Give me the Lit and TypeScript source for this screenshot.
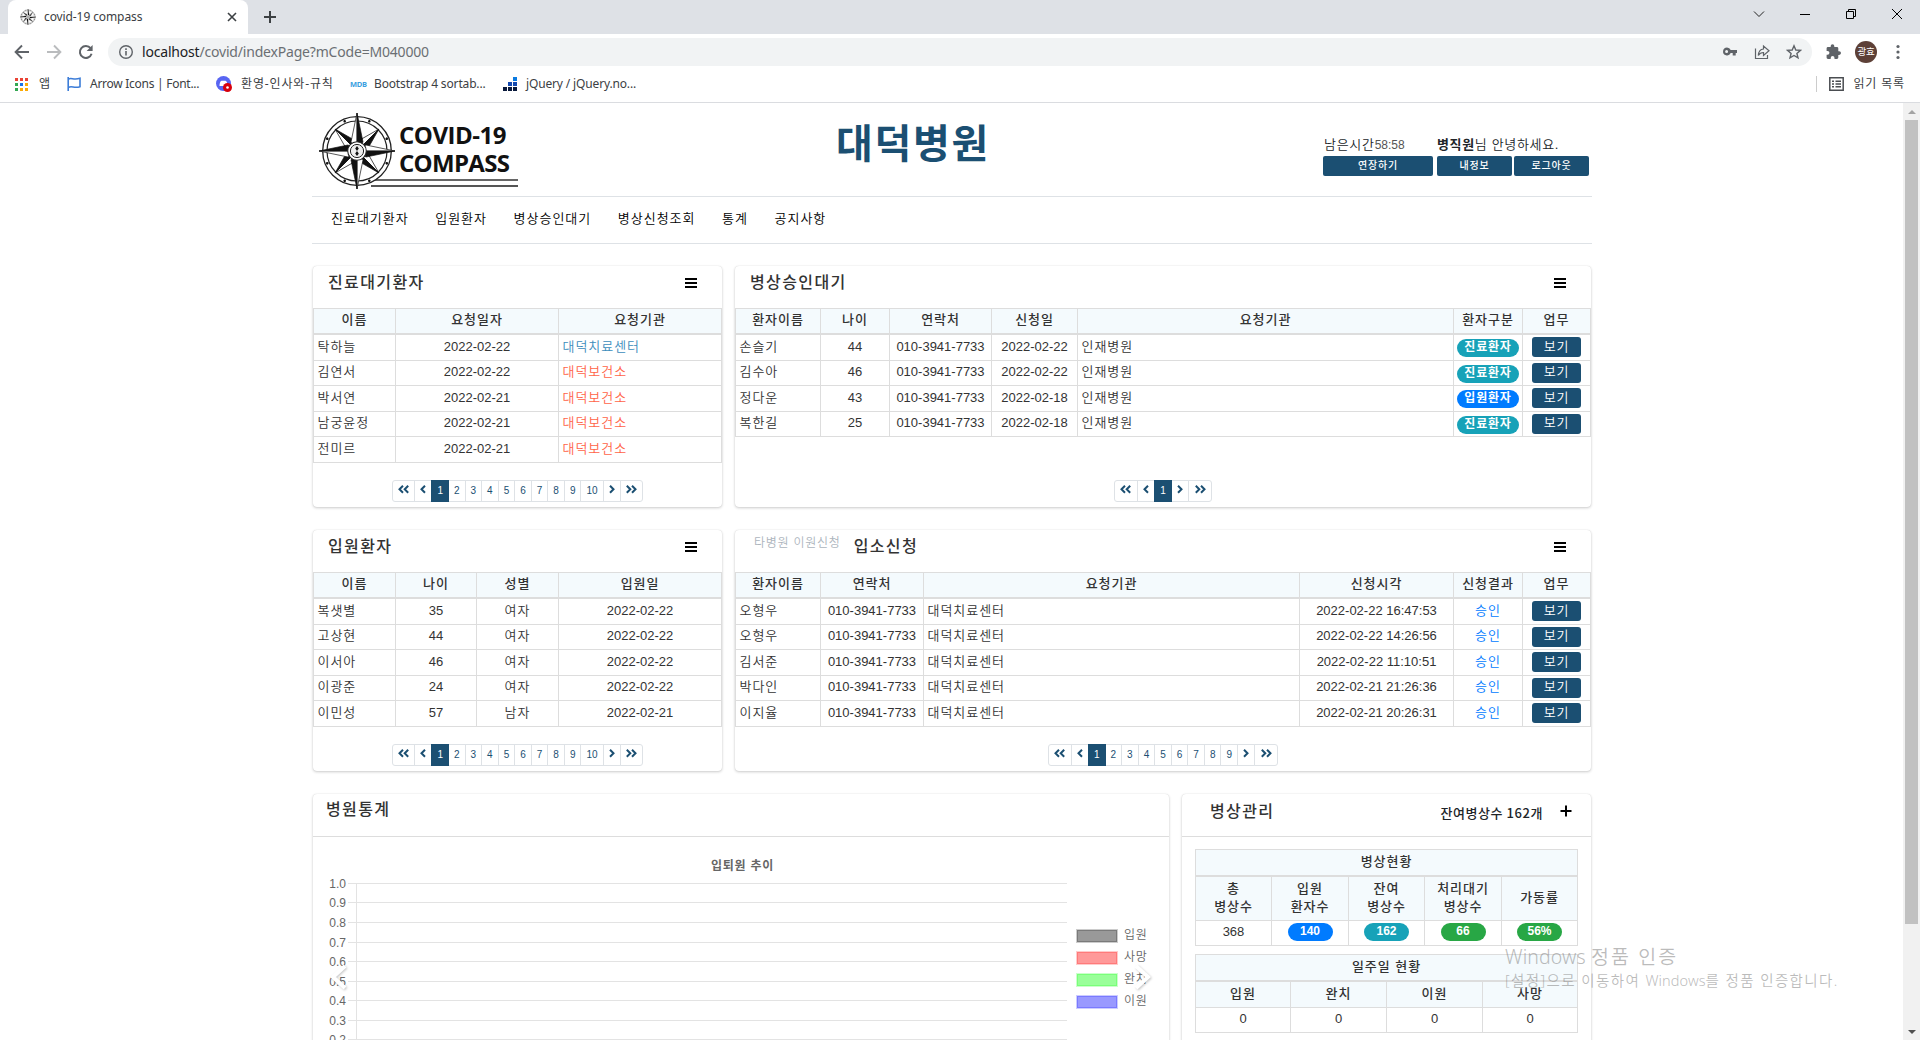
import { LitElement, html, css, svg, nothing, TemplateResult } from "lit";
import { customElement, property } from "lit/decorators.js";

type Cell = string | TemplateResult;
type Col = { w: number; label: string; align?: "left" };

const isKo = (s: string) => /[\uac00-\ud7a3]/.test(s);
const ko = (s: string) => (isKo(s) ? html`<span class="ko">${s}</span>` : s);
const link = (s: string, tone: string) => html`<span class="ko ${tone}">${s}</span>`;
const pill = (s: string, tone: string) => html`<span class="pill ${tone}">${s}</span>`;
const viewBtn = () => html`<button class="view">보기</button>`;

const tableStyles = css`
  * { box-sizing: border-box; }
  table {
    border-collapse: separate; border-spacing: 0; table-layout: fixed;
    border-left: 1px solid #ddd; border-top: 1px solid #ddd; width: 100%;
    font-size: 13px; line-height: 18px; color: #333;
  }
  th, td {
    border-right: 1px solid #ddd; border-bottom: 1px solid #ddd;
    padding: 0 4px 2px; height: 25px; text-align: center; white-space: nowrap;
    vertical-align: middle; overflow: hidden;
  }
  th { background: #f4fafd; font-weight: 500; padding: 0 2px 2px; }
  td { font-weight: 350; }
  .ko { letter-spacing: 0.95px; }
  .pill {
    display: inline-block; height: 18px; line-height: 17px; border-radius: 9px;
    color: #fff; font-weight: 700; font-size: 12px; vertical-align: middle;
  }
  .info { background: #17a2b8; }
  .primary { background: #007bff; }
  .success { background: #28a745; }
`;

@customElement("data-table")
class DataTable extends LitElement {
  @property({ attribute: false }) cols: Col[] = [];
  @property({ attribute: false }) rows: Cell[][] = [];
  static styles = [
    tableStyles,
    css`
      :host { display: block; }
      th { height: 26px; border-bottom-width: 2px; }
      tbody tr:nth-child(odd) td { height: 26px; }
      .left { text-align: left; padding-left: 3.5px; }
      .pill { width: 62px; letter-spacing: 0.8px; margin: 1px -1px 0; position: relative; top: 1px; }
      .view {
        display: block; width: 49px; height: 20px; margin: 0 auto; border: 0; border-radius: 3px;
        padding: 0 0 1px; background: #1b4f72; color: #fff; font: inherit; letter-spacing: 0.9px;
        line-height: 18px; position: relative; top: 0.5px;
      }
      .blue { color: #3c8dbc; }
      .red { color: #ff6347; }
      .ok { color: #007bff; }
    `,
  ];
  render() {
    return html`<table>
      <colgroup>${this.cols.map((c) => html`<col style="width:${c.w}px" />`)}</colgroup>
      <thead><tr>${this.cols.map((c) => html`<th>${ko(c.label)}</th>`)}</tr></thead>
      <tbody>
        ${this.rows.map((r) => html`<tr>${r.map((v, i) => html`<td class=${this.cols[i].align ?? ""}>${typeof v === "string" ? ko(v) : v}</td>`)}</tr>`)}
      </tbody>
    </table>`;
  }
}

@customElement("page-nav")
class PageNav extends LitElement {
  @property({ type: Number }) count = 1;
  static styles = css`
    :host { display: flex; justify-content: center; }
    .list { display: flex; height: 22px; }
    .item {
      box-sizing: border-box; height: 22px; border: 1px solid #dee2e6; margin-left: -1px; padding: 0 5px;
      font: 10px/20px "Liberation Sans", sans-serif; color: #1b4f72; background: #fff;
    }
    .item:first-child { margin-left: 0; border-radius: 3px 0 0 3px; }
    .item:last-child { border-radius: 0 3px 3px 0; }
    .on { background: #1b4f72; border-color: #1b4f72; color: #fff; position: relative; }
    .single { width: 18px; padding: 0 3px; }
    .double { width: 23.8px; padding: 0 4px; }
    svg { display: block; margin: 3px auto 0; fill: none; stroke: #1b4f72; stroke-width: 2; }
  `;
  private icon(d: string, w: number) {
    return html`<svg width=${w} height="12" viewBox="0 0 ${w} 12"><path d=${d} /></svg>`;
  }
  render() {
    const pages = Array.from({ length: this.count }, (_, i) => i + 1);
    return html`<div class="list">
      <span class="item double">${this.icon("M5 1.7 1.5 5.2 5 8.7M10.200 1.700 6.700 5.200 10.200 8.700", 12)}</span>
      <span class="item single">${this.icon("M6 1.7 2.500 5.200 6 8.700", 8)}</span>
      ${pages.map((p) => html`<span class="item ${p === 1 ? "on" : ""}">${p}</span>`)}
      <span class="item single">${this.icon("M2 1.7 5.500 5.200 2 8.700", 8)}</span>
      <span class="item double">${this.icon("M1.800 1.700 5.300 5.200 1.800 8.700M7 1.700 10.500 5.200 7 8.700", 12)}</span>
    </div>`;
  }
}

@customElement("list-card")
class ListCard extends LitElement {
  @property() heading = "";
  @property() other = "";
  @property({ type: Number }) pages = 1;
  @property({ attribute: false }) cols: Col[] = [];
  @property({ attribute: false }) rows: Cell[][] = [];
  static styles = css`
    :host {
      display: flex; flex-direction: column; height: 241px; background: #fff; border-radius: 4px;
      box-shadow: 0 0 1px rgba(0, 0, 0, 0.15), 0 1px 3px rgba(0, 0, 0, 0.2);
    }
    .head { height: 42px; flex: none; display: flex; padding: 0 25px 0 15px; align-items: flex-start; box-sizing: border-box; }
    .title { font-size: 16px; font-weight: 500; letter-spacing: 1.4px; line-height: 24px; margin-top: 5px; color: #333; }
    .other { font-size: 12px; font-weight: 350; letter-spacing: 0.75px; line-height: 18px; color: #adb5bd; margin: 4px 13px 0 4px; }
    .menu { margin: 12px 0 0 auto; display: block; }
    .grow { flex: 1; }
    .foot { padding-bottom: 5px; }
  `;
  render() {
    return html`<div class="head">
        ${this.other ? html`<span class="other">${this.other}</span>` : nothing}
        <span class="title">${this.heading}</span>
        <svg class="menu" width="12" height="11" viewBox="0 0 12 11"><path d="M0 0h12v2H0zM0 4h12v2H0zM0 8h12v2H0z" /></svg>
      </div>
      <data-table .cols=${this.cols} .rows=${this.rows}></data-table>
      <div class="grow"></div>
      <page-nav class="foot" .count=${this.pages}></page-nav>`;
  }
}

@customElement("compass-mark")
class CompassMark extends LitElement {
  static styles = css`:host { display: block; } svg { display: block; width: 100%; height: 100%; }`;
  private point(angle: number, r: number, w: number) {
    return svg`<g transform="rotate(${angle})">
      <path d="M0 ${-r}L${-w} ${-w * 1.5}L0 0z" fill="#fff" stroke="#111" stroke-width=".7"/>
      <path d="M0 ${-r}L${w} ${-w * 1.5}L0 0z" fill="#111" stroke="#111" stroke-width=".7"/></g>`;
  }
  render() {
    return html`<svg viewBox="-38 -38 76 76">
      <circle r="34.3" fill="#fff" stroke="#222" stroke-width="1.3" />
      <circle r="30" fill="none" stroke="#222" stroke-width="1.2" />
      ${[22.5, 67.5, 112.5, 157.5, 202.5, 247.5, 292.5, 337.5].map((a) => svg`<circle r="1.3" cy="-32.2" transform="rotate(${a})" fill="#111"/>`)}
      ${[45, 135, 225, 315].map((a) => this.point(a, 31, 6))}
      ${[0, 90, 180, 270].map((a) => this.point(a, 38, 6))}
      <circle r="9.3" fill="#fff" stroke="#222" stroke-width="1.1" />
      <circle r="6.6" fill="#eee" stroke="#222" stroke-width="1" />
      <path d="M0-5 1.8-2.4 0 0-1.8-2.4zM0 0 1.8 2.4 0 5-1.8 2.4z" fill="#111" />
    </svg>`;
  }
}

@customElement("browser-bar")
class BrowserBar extends LitElement {
  static styles = css`
    :host { display: block; height: 103px; box-sizing: border-box; border-bottom: 1px solid #dadce0; background: #fff; color: #3c4043; font-size: 12px; }
    * { box-sizing: border-box; }
    svg { display: block; flex: none; }
    .strip { height: 34px; background: #dee1e6; display: flex; align-items: center; padding-left: 8px; }
    .tab { width: 240px; height: 34px; background: #fff; border-radius: 8px 8px 0 0; display: flex; align-items: center; padding: 0 11px 0 12px; }
    .fav { width: 16px; height: 16px; margin-right: 8px; }
    .name { flex: 1; line-height: 16px; letter-spacing: -0.1px; }
    .plus { margin-left: 15px; }
    .controls { margin-left: auto; display: flex; gap: 30px; padding: 0 15px 6px 0; }
    .tools { height: 36px; display: flex; align-items: center; padding: 0 14px; }
    .nav { display: flex; gap: 16px; }
    .omni { margin-left: 14px; width: 1704px; height: 28px; border-radius: 14px; background: #f1f3f4; display: flex; align-items: center; padding: 0 10px; }
    .url { margin-left: 8px; font-size: 14px; line-height: 20px; color: #6b6f73; letter-spacing: -0.19px; }
    .host { color: #202124; }
    .acts { margin-left: auto; display: flex; gap: 16px; }
    .ext { margin: 0 13px 0 14px; }
    .face { width: 22px; height: 22px; border-radius: 50%; background: #5d4037; color: #fff; font-size: 9.5px; line-height: 21px; text-align: center; letter-spacing: -0.2px; }
    .dots { margin-left: 13px; }
    .marks { height: 28px; display: flex; align-items: center; padding: 0 15px; line-height: 18px; white-space: nowrap; }
    .mark { display: flex; align-items: center; flex: none; }
    .apps { width: 52px; gap: 11px; }
    .flag { width: 149px; gap: 9px; }
    .disc { width: 134px; gap: 9px; }
    .mdb { width: 153px; gap: 8px; }
    .jq { gap: 9px; }
    .tight { letter-spacing: -0.15px; }
    .tighter { letter-spacing: -0.27px; }
    .wide { letter-spacing: 0.85px; }
    .mdbtxt { font: 700 7.5px/10px "Open Sans", sans-serif; color: #3aa0e0; width: 16px; letter-spacing: -0.3px; }
    .read { margin-left: auto; border-left: 1px solid #ccc; height: 16px; padding-left: 12px; gap: 9px; }
  `;
  render() {
    return html`
      <div class="strip">
        <div class="tab">
          <compass-mark class="fav"></compass-mark><span class="name">covid-19 compass</span>
          <svg width="10" height="10" viewBox="0 0 10 10" stroke="#3c4043" stroke-width="1.6"><path d="M1 1 9 9M9 1 1 9" /></svg>
        </div>
        <svg class="plus" width="14" height="14" viewBox="0 0 14 14" stroke="#3c4043" stroke-width="2"><path d="M7 1v12M1 7h12" /></svg>
        <div class="controls">
          <svg width="16" height="16" viewBox="0 0 16 16" fill="none" stroke="#222"><path d="m3 5.5 5 5 5-5" /></svg>
          <svg width="16" height="16" viewBox="0 0 16 16" stroke="#000"><path d="M3 8.5h10" /></svg>
          <svg width="16" height="16" viewBox="0 0 16 16" fill="none" stroke="#000"><path d="M3.5 5.5h7v7h-7zM5.500 5.500v-2h7v7h-2" /></svg>
          <svg width="16" height="16" viewBox="0 0 16 16" stroke="#000"><path d="m3 3 10 10M13 3 3 13" /></svg>
        </div>
      </div>
      <div class="tools">
        <div class="nav">
          <svg width="16" height="16" viewBox="0 0 16 16" fill="none" stroke="#5f6368" stroke-width="1.9"><path d="M15 8H2M8 1.500 1.600 8 8 14.500" /></svg>
          <svg width="16" height="16" viewBox="0 0 16 16" fill="none" stroke="#babcbe" stroke-width="1.900"><path d="M1 8h13M8 1.500 14.400 8 8 14.500" /></svg>
          <svg width="16" height="16" viewBox="0 0 16 16" fill="none" stroke="#5f6368" stroke-width="2"><path d="M13.600 9.800A6 6 0 1 1 12.600 4.200" /><path d="M14.600 1v6h-6z" fill="#5f6368" stroke="none" /></svg>
        </div>
        <div class="omni">
          <svg width="16" height="16" viewBox="0 0 16 16"><circle cx="8" cy="8" r="6.300" fill="none" stroke="#5f6368" stroke-width="1.400" /><path d="M7.200 7h1.600v4.500H7.200zM7.200 4.300h1.600v1.600H7.200z" fill="#5f6368" /></svg>
          <span class="url"><span class="host">localhost</span>/covid/indexPage?mCode=M040000</span>
          <div class="acts">
            <svg width="16" height="16" viewBox="0 0 16 16" fill="#5f6368"><path fill-rule="evenodd" d="M5 3.500a4 4 0 0 1 3.700 2.600H15v3h-1.300V11.500h-3V9.100h-2A4 4 0 1 1 5 3.500zm-.4 2.600a1.500 1.500 0 1 0 0 3 1.500 1.500 0 0 0 0-3z" /></svg>
            <svg width="16" height="16" viewBox="0 0 16 16" fill="none" stroke="#5f6368" stroke-width="1.200"><path d="M1.500 4.500v10h12v-3.500" /><path d="M9.500 2v3C6 5.300 4.500 8 4.300 11.500 5.600 9.300 7 8.500 9.500 8.500v3L15 6.800z" /></svg>
            <svg width="16" height="16" viewBox="0 0 16 16" fill="none" stroke="#5f6368" stroke-width="1.400"><path d="m8 1.800 1.800 4.200 4.600.4-3.500 3 1.100 4.500L8 11.500l-4 2.400 1.100-4.500-3.500-3L6.200 6z" /></svg>
          </div>
        </div>
        <svg class="ext" width="16" height="16" viewBox="0 0 16 16" fill="#5f6368"><path d="M13.200 7.300h-.9V4.400c0-.8-.6-1.400-1.400-1.400H8.300v-.9a1.800 1.800 0 0 0-3.600 0V3H2C1.200 3 .6 3.600.6 4.400v2.500h.9a1.900 1.900 0 0 1 0 3.900H.6v2.800c0 .8.6 1.400 1.400 1.400h2.700v-1a1.900 1.900 0 0 1 3.800 0v1h2.400c.8 0 1.400-.6 1.400-1.400v-2.700h.9a1.800 1.800 0 0 0 0-3.600z" /></svg>
        <span class="face">광효</span>
        <svg class="dots" width="16" height="16" viewBox="0 0 16 16" fill="#5f6368"><circle cx="8" cy="2.500" r="1.600" /><circle cx="8" cy="8" r="1.600" /><circle cx="8" cy="13.500" r="1.600" /></svg>
      </div>
      <div class="marks">
        <span class="mark apps"><svg width="13" height="13" viewBox="0 0 13 13">
          <path fill="#ea4335" d="M0 0h3v3H0zM5 0h3v3H5zM10 0h3v3h-3z" /><path fill="#34a853" d="M0 5h3v3H0zM0 10h3v3H0z" /><path fill="#1a73e8" d="M5 5h3v3H5z" /><path fill="#fbaa05" d="M10 5h3v3h-3zM5 10h3v3H5zM10 10h3v3h-3z" /></svg>앱</span>
        <span class="mark flag"><svg width="14" height="14" viewBox="0 0 14 14" fill="none" stroke="#3d7dd8" stroke-width="1.600"><path d="M1.200 0v14" /><path d="M1.500 2c3-1.600 5 1.200 11.500-.7v8.400C7 11.500 5 8.500 1.500 10.300" /></svg><span class="tighter">Arrow Icons | Font...</span></span>
        <span class="mark disc"><svg width="16" height="16" viewBox="0 0 16 16"><circle cx="7.500" cy="7.500" r="7.500" fill="#5865f2" /><path d="M3.500 10c0-3 .8-5 2-5.300h4c1 .3 1.800 2 2 4L9 10z" fill="#fff" /><circle cx="11.500" cy="11.500" r="4.500" fill="#d8000c" /><circle cx="11.500" cy="11.500" r="1.300" fill="#fff" /></svg><span class="wide">환영-인사와-규칙</span></span>
        <span class="mark mdb"><span class="mdbtxt">MDB</span><span class="tight">Bootstrap 4 sortab...</span></span>
        <span class="mark jq"><svg width="14" height="14" viewBox="0 0 14 14"><path fill="#0a1a3c" d="M0 10h4v4H0zM5 10h4v4H5zM10 10h4v4h-4z" /><path fill="#1449b0" d="M5 5h4v4H5zM10 5h4v4h-4z" /><path fill="#0a7ae0" d="M10 0h4v4h-4z" /></svg><span class="tight">jQuery / jQuery.no...</span></span>
        <span class="mark read"><svg width="15" height="14" viewBox="0 0 15 14" fill="none" stroke="#4a4d51" stroke-width="1.500"><path d="M.8.800h13.400v12.400H.800zM3 4.200h2M6.500 4.200h5.500M3 7h2M6.500 7H12M3 9.800h2M6.500 9.800H12" /></svg><span class="wide">읽기 목록</span></span>
      </div>`;
  }
}

@customElement("trend-chart")
class TrendChart extends LitElement {
  static styles = css`
    :host { display: block; }
    svg { display: block; }
    text { font-family: "Liberation Sans", "Noto Sans CJK KR", sans-serif; font-size: 12px; fill: #666; }
    .t { font-weight: 700; letter-spacing: 0.75px; }
    .l { letter-spacing: 0.6px; font-weight: 350; }
    .arrow { fill: none; stroke: #fff; stroke-width: 4; filter: drop-shadow(1px 1px 1px rgba(0, 0, 0, 0.22)); }
  `;
  render() {
    const ys = [46, 65, 85, 105, 124, 144, 163, 183, 202];
    const legend: [string, string][] = [["입원", "0,0,0"], ["사망", "255,0,0"], ["완치", "0,255,0"], ["이원", "0,0,255"]];
    return html`<svg width="856" height="240" viewBox="0 0 856 240">
      <text class="t" x="429.500" y="33" text-anchor="middle">입퇴원 추이</text>
      ${ys.map((y, i) => svg`<path d="M35 ${y + 0.5}H754" stroke="#e3e3e3"/><text x="33" y=${y + 4.5} text-anchor="end">${(1 - i / 10).toFixed(1)}</text>`)}
      <path d="M43.500 46V240" stroke="#e3e3e3" />
      ${legend.map(([name, c], i) => svg`<rect x="764" y=${93 + i * 22} width="40" height="12" fill="rgba(${c},.4)" stroke="rgba(${c},.2)" stroke-width="2"/>
        <text class="l" x="811" y=${102 + i * 22}>${name}</text>`)}
      <path class="arrow" d="M32 129 20 140 32 151" />
      <path class="arrow" d="M823 129 835 140 823 151" />
    </svg>`;
  }
}

@customElement("bed-tables")
class BedTables extends LitElement {
  static styles = [
    tableStyles,
    css`
      :host { display: flex; flex-direction: column; gap: 8px; padding: 12px 13px; }
      .cap { height: 27px; border-bottom-width: 2px; }
      .two { height: 44px; }
      .one { height: 26px; }
      .pill { width: 45px; }
    `,
  ];
  render() {
    const heads = [["총", "병상수"], ["입원", "환자수"], ["잔여", "병상수"], ["처리대기", "병상수"], ["가동률"]];
    return html`
      <table>
        <colgroup>${[76, 77, 76, 77, 76].map((w) => html`<col style="width:${w}px" />`)}</colgroup>
        <tr><th class="cap" colspan="5">${ko("병상현황")}</th></tr>
        <tr>${heads.map((h) => html`<th class="two">${h.map((s, i) => html`${i ? html`<br />` : nothing}${ko(s)}`)}</th>`)}</tr>
        <tr><td>368</td><td>${pill("140", "primary")}</td><td>${pill("162", "info")}</td><td>${pill("66", "success")}</td><td>${pill("56%", "success")}</td></tr>
      </table>
      <table>
        <colgroup>${[95, 96, 96, 95].map((w) => html`<col style="width:${w}px" />`)}</colgroup>
        <tr><th class="cap" colspan="4">${ko("일주일 현황")}</th></tr>
        <tr>${["입원", "완치", "이원", "사망"].map((s) => html`<th class="one">${ko(s)}</th>`)}</tr>
        <tr>${[0, 0, 0, 0].map((n) => html`<td>${n}</td>`)}</tr>
      </table>`;
  }
}

const waitingCols: Col[] = [{ w: 82, label: "이름", align: "left" }, { w: 163, label: "요청일자" }, { w: 163, label: "요청기관", align: "left" }];
const waiting: Cell[][] = [
  ["탁하늘", "2022-02-22", link("대덕치료센터", "blue")],
  ["김연서", "2022-02-22", link("대덕보건소", "red")],
  ["박서연", "2022-02-21", link("대덕보건소", "red")],
  ["남궁윤정", "2022-02-21", link("대덕보건소", "red")],
  ["전미르", "2022-02-21", link("대덕보건소", "red")],
];
const approvalCols: Col[] = [
  { w: 85, label: "환자이름", align: "left" }, { w: 69, label: "나이" }, { w: 102, label: "연락처" }, { w: 86, label: "신청일" },
  { w: 376, label: "요청기관", align: "left" }, { w: 69, label: "환자구분" }, { w: 68, label: "업무" },
];
const approval: Cell[][] = (
  [["손슬기", "44", "22", "진료환자"], ["김수아", "46", "22", "진료환자"], ["정다운", "43", "18", "입원환자"], ["복한길", "25", "18", "진료환자"]] as string[][]
).map(([n, age, d, kind]) => [n, age, "010-3941-7733", `2022-02-${d}`, "인재병원", pill(kind, kind === "입원환자" ? "primary" : "info"), viewBtn()]);
const admittedCols: Col[] = [{ w: 82, label: "이름", align: "left" }, { w: 81, label: "나이" }, { w: 82, label: "성별" }, { w: 163, label: "입원일" }];
const admitted: Cell[][] = [
  ["복샛별", "35", "여자", "2022-02-22"],
  ["고상현", "44", "여자", "2022-02-22"],
  ["이서아", "46", "여자", "2022-02-22"],
  ["이광준", "24", "여자", "2022-02-22"],
  ["이민성", "57", "남자", "2022-02-21"],
];
const requestCols: Col[] = [
  { w: 85, label: "환자이름", align: "left" }, { w: 103, label: "연락처" }, { w: 376, label: "요청기관", align: "left" },
  { w: 154, label: "신청시각" }, { w: 69, label: "신청결과" }, { w: 68, label: "업무" },
];
const requests: Cell[][] = (
  [["오형우", "2022-02-22 16:47:53"], ["오형우", "2022-02-22 14:26:56"], ["김서준", "2022-02-22 11:10:51"], ["박다인", "2022-02-21 21:26:36"], ["이지율", "2022-02-21 20:26:31"]] as string[][]
).map(([n, t]) => [n, "010-3941-7733", "대덕치료센터", t, link("승인", "ok"), viewBtn()]);

@customElement("app-root")
export class AppRoot extends LitElement {
  static styles = css`
    :host {
      display: flex; flex-direction: column; position: relative; width: 1920px; height: 1040px; overflow: hidden;
      background: #fff; font-family: "Liberation Sans", "Noto Sans CJK KR", sans-serif; color: #212529;
    }
    * { box-sizing: border-box; }
    .chrome { flex: none; font-family: "Noto Sans", "Noto Sans CJK KR", sans-serif; }
    .view { flex: 1; display: flex; min-height: 0; }
    .page { flex: 1; overflow: hidden; padding-left: 312px; }
    .wrap { width: 1280px; }
    .top { height: 94px; border-bottom: 1px solid #dee2e6; display: flex; }
    .logo { width: 206px; display: flex; padding: 10px 0 0 7px; flex: none; }
    .mark { width: 76px; height: 76px; flex: none; z-index: 1; }
    .brand { margin-left: 4px; padding-top: 8px; width: 119px; }
    .word { font: 700 24px/28px "Open Sans", sans-serif; color: #111; display: block; white-space: nowrap; }
    .w1 { letter-spacing: -0.5px; }
    .w2 { letter-spacing: -0.68px; }
    .rules { height: 8px; border-top: 2px solid #666; border-bottom: 2px solid #555; margin: 2px 0 0 -28px; }
    .hospital { width: 156px; margin: 11px 0 0 318px; font-size: 40px; line-height: 60px; font-weight: 700; color: #1b4f72; letter-spacing: 1.7px; white-space: nowrap; }
    .account { margin: 32px 3px 0 auto; display: flex; gap: 4px; font-size: 13px; line-height: 20px; font-weight: 350; }
    .session { width: 110px; padding-left: 1px; }
    .user { width: 152px; letter-spacing: 0.65px; }
    .ses { letter-spacing: 0.7px; }
    .time { font-size: 12px; color: #555; }
    .btns { display: flex; gap: 2px; margin-top: 1px; }
    .session .btns { margin-left: -1px; }
    .btn { flex: 1; height: 20px; border: 0; border-radius: 2px; background: #1b4f72; color: #fff; font: 500 10px/16px "Noto Sans CJK KR", sans-serif; letter-spacing: 0.8px; padding: 0 0 3px; }
    .menu { height: 47px; border-bottom: 1px solid #dee2e6; display: flex; gap: 26.600px; padding: 12px 0 0 19px; font-size: 13px; line-height: 20px; letter-spacing: 0.98px; color: #000; font-weight: 350; }
    .cards { padding: 22px 1px 0; display: grid; gap: 23px; }
    .pair { display: grid; grid-template-columns: 409px 856px; gap: 13px; }
    .flip { grid-template-columns: 856px 409px; }
    .panel { height: 420px; background: #fff; border-radius: 4px; box-shadow: 0 0 1px rgba(0, 0, 0, 0.15), 0 1px 3px rgba(0, 0, 0, 0.2); }
    .head { height: 43px; border-bottom: 1px solid #ddd; display: flex; padding: 4px 19px 0 13px; }
    .title { font-size: 16px; font-weight: 500; letter-spacing: 1.4px; line-height: 24px; color: #333; }
    .beds { padding: 6px 19px 0 28px; }
    .left { margin-left: auto; font-size: 13px; font-weight: 500; line-height: 26px; letter-spacing: 0.55px; font-family: "Noto Sans CJK KR", sans-serif; }
    .add { margin: 5px 0 0 17px; }
    .scroll { width: 17px; background: #f1f1f1; display: flex; flex-direction: column; align-items: center; flex: none; padding: 7px 0 6px; justify-content: space-between; }
    .thumb { width: 13px; height: 804px; background: #c1c1c1; margin: 6px 0 auto; }
    .notice { position: absolute; left: 1505px; top: 943px; color: rgba(120, 120, 120, 0.5); font-family: "Noto Sans", "Noto Sans CJK KR", sans-serif; white-space: nowrap; font-weight: 350; }
    .n1 { font-size: 19.500px; line-height: 27px; letter-spacing: 2.100px; }
    .n2 { font-size: 14.500px; line-height: 20px; letter-spacing: 1.400px; }
    .en { letter-spacing: 0.1px; }
  `;
  render() {
    return html`
      <browser-bar class="chrome"></browser-bar>
      <div class="view">
        <main class="page">
          <div class="wrap">
            <header class="top">
              <div class="logo">
                <compass-mark class="mark"></compass-mark>
                <div class="brand"><span class="word w1">COVID-19</span><span class="word w2">COMPASS</span><div class="rules"></div></div>
              </div>
              <div class="hospital">대덕병원</div>
              <div class="account">
                <div class="session"><span class="ses">남은시간</span><span class="time">58:58</span><div class="btns"><button class="btn">연장하기</button></div></div>
                <div class="user"><b>병직원</b>님 안녕하세요.<div class="btns"><button class="btn">내정보</button><button class="btn">로그아웃</button></div></div>
              </div>
            </header>
            <nav class="menu">${["진료대기환자", "입원환자", "병상승인대기", "병상신청조회", "통계", "공지사항"].map((s) => html`<span>${s}</span>`)}</nav>
            <div class="cards">
              <div class="pair">
                <list-card heading="진료대기환자" .pages=${10} .cols=${waitingCols} .rows=${waiting}></list-card>
                <list-card heading="병상승인대기" .pages=${1} .cols=${approvalCols} .rows=${approval}></list-card>
              </div>
              <div class="pair">
                <list-card heading="입원환자" .pages=${10} .cols=${admittedCols} .rows=${admitted}></list-card>
                <list-card heading="입소신청" other="타병원 이원신청" .pages=${9} .cols=${requestCols} .rows=${requests}></list-card>
              </div>
              <div class="pair flip">
                <section class="panel"><div class="head"><span class="title">병원통계</span></div><trend-chart></trend-chart></section>
                <section class="panel">
                  <div class="head beds"><span class="title">병상관리</span><span class="left">잔여병상수 162개</span>
                    <svg class="add" width="12" height="12" viewBox="0 0 12 12" stroke="#000" stroke-width="2"><path d="M6 .5v11M.5 6h11" /></svg></div>
                  <bed-tables></bed-tables>
                </section>
              </div>
            </div>
          </div>
        </main>
        <div class="scroll">
          <svg width="8" height="4" viewBox="0 0 8 4"><path d="M4 0 8 4H0z" fill="#a3a3a3" /></svg>
          <div class="thumb"></div>
          <svg width="8" height="4" viewBox="0 0 8 4"><path d="M0 0h8L4 4z" fill="#505050" /></svg>
        </div>
      </div>
      <div class="notice"><div class="n1"><span class="en">Windows </span>정품 인증</div><div class="n2">[설정]으로 이동하여 <span class="en">Windows</span>를 정품 인증합니다.</div></div>`;
  }
}
